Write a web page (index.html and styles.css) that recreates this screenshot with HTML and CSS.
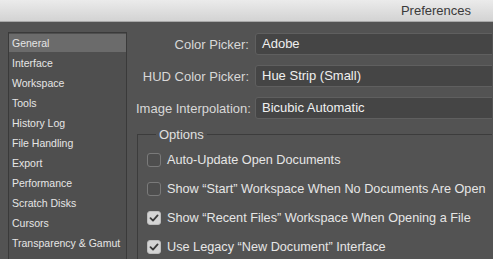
FILE: index.html
```html
<!DOCTYPE html>
<html>
<head>
<meta charset="utf-8">
<link rel="stylesheet" href="styles.css">
</head>
<body>
<div class="titlebar"><span class="title">Preferences</span></div>
<div class="main">
  <ul class="sidebar">
    <li class="item selected">General</li>
    <li class="item">Interface</li>
    <li class="item">Workspace</li>
    <li class="item">Tools</li>
    <li class="item">History Log</li>
    <li class="item">File Handling</li>
    <li class="item">Export</li>
    <li class="item">Performance</li>
    <li class="item">Scratch Disks</li>
    <li class="item">Cursors</li>
    <li class="item">Transparency &amp; Gamut</li>
  </ul>
  <div class="content">
    <div class="form">
      <label class="label">Color Picker:</label>
      <div class="select">Adobe</div>
      <label class="label">HUD Color Picker:</label>
      <div class="select">Hue Strip (Small)</div>
      <label class="label">Image Interpolation:</label>
      <div class="select">Bicubic Automatic</div>
    </div>
    <fieldset class="options">
      <legend class="legend">Options</legend>
      <div class="check"><span class="box"></span><span class="ctext">Auto-Update Open Documents</span></div>
      <div class="check"><span class="box"></span><span class="ctext">Show “Start” Workspace When No Documents Are Open</span></div>
      <div class="check"><span class="box on"><svg width="10" height="10" viewBox="0 0 10 10"><path d="M1.5 5.2 L4 7.6 L8.6 2.4" fill="none" stroke="#3a3a3a" stroke-width="1.8" stroke-linecap="round" stroke-linejoin="round"/></svg></span><span class="ctext">Show “Recent Files” Workspace When Opening a File</span></div>
      <div class="check"><span class="box on"><svg width="10" height="10" viewBox="0 0 10 10"><path d="M1.5 5.2 L4 7.6 L8.6 2.4" fill="none" stroke="#3a3a3a" stroke-width="1.8" stroke-linecap="round" stroke-linejoin="round"/></svg></span><span class="ctext">Use Legacy “New Document” Interface</span></div>
    </fieldset>
  </div>
</div>
</body>
</html>
```
FILE: styles.css
```css
html, body {
  margin: 0;
  padding: 0;
  width: 493px;
  height: 259px;
  overflow: hidden;
  background: #535353;
  font-family: "Liberation Sans", Arial, sans-serif;
}
.titlebar {
  height: 21px;
  border-top: 1px solid #3c3c3c;
  background: linear-gradient(#ebebeb, #d3d3d3);
  border-bottom: 1px solid #a8a8a8;
  display: flex;
  justify-content: flex-end;
  align-items: center;
  padding-right: 22px;
  box-sizing: content-box;
  margin-top: -1px;
}
.title {
  font-size: 13px;
  color: #3a3a3a;
}
.main {
  display: flex;
  align-items: flex-start;
  height: 237px;
  overflow: hidden;
}
.sidebar {
  list-style: none;
  margin: 10px 0 0 8px;
  padding: 1px 0 0 0;
  width: 117px;
  height: 240px;
  flex: none;
  border: 1px solid #3a3a3a;
  background: #4f4f4f;
}
.item {
  height: 20px;
  line-height: 19px;
  padding-left: 3px;
  font-size: 10.5px;
  color: #e6e6e6;
  white-space: nowrap;
}
.item.selected {
  background: #6b6b6b;
  height: 18px;
  line-height: 18px;
  margin-bottom: 2px;
}
.content {
  flex: none;
  margin-left: 9px;
  width: 356px;
  overflow: hidden;
}
.form {
  display: grid;
  grid-template-columns: 113px 260px;
  column-gap: 6px;
  row-gap: 10px;
  margin-top: 11px;
  align-items: center;
}
.label {
  text-align: right;
  font-size: 13px;
  color: #d8d8d8;
  white-space: nowrap;
}
.select {
  height: 20px;
  line-height: 20px;
  border: 1px solid #5f5f5f;
  border-radius: 3px;
  background: #454545;
  color: #f0f0f0;
  font-size: 13px;
  padding-left: 6px;
}
.options {
  margin: 8px 0 0 1px;
  padding: 3px 0 40px 9px;
  border: 1px solid #3c3c3c;
  border-right: none;
  min-width: 0;
}
.legend {
  padding: 0 3px;
  margin-left: 9px;
  font-size: 13px;
  color: #e0e0e0;
}
.check {
  display: flex;
  align-items: center;
  height: 29px;
  gap: 6px;
}
.box {
  width: 12px;
  height: 12px;
  border: 1px solid #7a7a7a;
  border-radius: 3px;
  background: #4e4e4e;
  display: flex;
  align-items: center;
  justify-content: center;
  flex: none;
}
.box.on {
  background: #d4d4d4;
  border-color: #bdbdbd;
}
.ctext {
  font-size: 12.7px;
  color: #e6e6e6;
  white-space: nowrap;
}
```
